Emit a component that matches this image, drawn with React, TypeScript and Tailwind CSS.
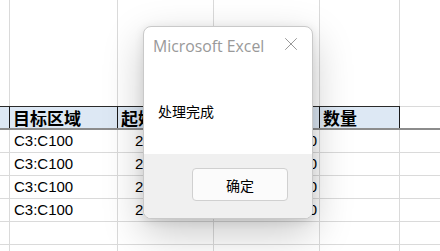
import { X } from "lucide-react";

const COLS = [
  "w-[10px]",
  "w-[108px]",
  "w-[96px]",
  "w-[106px]",
  "w-[80px]",
  "flex-1",
] as const;

const ROWS = [
  ["", "C3:C100", "2", "100", "", ""],
  ["", "C3:C100", "2", "100", "", ""],
  ["", "C3:C100", "2", "100", "", ""],
  ["", "C3:C100", "20", "100", "", ""],
  ["", "", "", "", "", ""],
  ["", "", "", "", "", ""],
];

const HEADERS = ["", "目标区域", "起始行", "结束行", "数量", ""];

export default function App() {
  return (
    <div className="relative w-[440px] h-[251px] overflow-hidden bg-white font-['Liberation_Sans','Noto_Sans_CJK_SC',sans-serif] text-black">
      {/* ── Sheet ─────────────────────────── */}
      <div className="flex h-[106px]">
        {COLS.map((w, i) => (
          <div key={i} className={`${w} ${i < 5 ? "border-r" : ""} border-[#dadada]`} />
        ))}
      </div>

      {/* header row */}
      <div className="flex h-[24px] border-b-2 border-[#8c8c8c]">
        {COLS.map((w, i) => (
          <div
            key={i}
            className={`${w} flex items-center whitespace-nowrap border-t ${
              i < 5
                ? "bg-[#dde8f4] border-r border-r-[#1a1a1a] border-t-[#2a2a2a]"
                : "border-t-[#dadada]"
            } pl-[3px] font-['Noto_Sans_CJK_SC',sans-serif] text-[17px] font-bold leading-[20px]`}
          >
            {HEADERS[i]}
          </div>
        ))}
      </div>

      {ROWS.map((row, r) => (
        <div key={r} className="flex h-[23px] border-b border-[#dadada]">
          {COLS.map((w, i) => (
            <div
              key={i}
              className={`${w} flex items-center whitespace-nowrap ${
                i < 5 ? "border-r border-[#dadada]" : ""
              } ${i === 2 ? "pl-[17px]" : i === 3 ? "justify-end pr-[2px]" : "pl-[4px]"} text-[15px] leading-[18px]`}
            >
              {row[i]}
            </div>
          ))}
        </div>
      ))}

      {/* ── Dialog ────────────────────────── */}
      <div className="absolute left-[143px] top-[26px] flex h-[193px] w-[170px] flex-col overflow-hidden rounded-[8px] border border-[#c9c9c9] bg-white shadow-[0_14px_40px_rgba(0,0,0,0.22),0_2px_10px_rgba(0,0,0,0.1)]">
        <div className="relative h-[127px]">
          <div className="absolute left-[9px] top-[8px] font-['Open_Sans',sans-serif] text-[15.8px] leading-[22px] text-[#999999]">
            Microsoft Excel
          </div>
          <X className="absolute left-[136px] top-[6px] h-[22px] w-[22px] text-[#8f8f8f]" strokeWidth={1} />
          <div className="absolute left-[14px] top-[74px] font-['Noto_Sans_CJK_SC',sans-serif] text-[14px] leading-[20px]">
            处理完成
          </div>
        </div>
        <div className="flex flex-1 justify-end bg-[#f0f0f0] pr-[24px] pt-[14px]">
          <button className="flex h-[33px] w-[96px] items-center justify-center rounded-[4px] border border-[#d0d0d0] bg-[#fbfbfb] font-['Noto_Sans_CJK_SC',sans-serif] text-[14px] leading-none">
            确定
          </button>
        </div>
      </div>
    </div>
  );
}
